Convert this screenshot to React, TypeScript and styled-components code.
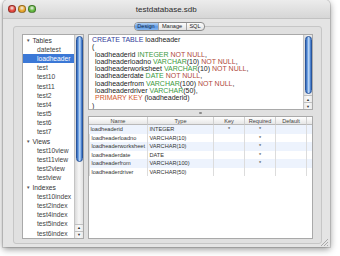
import React from 'react';
import styled, { createGlobalStyle, css } from 'styled-components';

const GlobalStyle = createGlobalStyle`
  html, body { margin: 0; padding: 0; background: #fff; }
  body { font-family: "Liberation Sans", Arial, sans-serif; }
  * { box-sizing: border-box; }
`;

// ─── Window chrome ─────────────────────────────────────────────────────────
const Page = styled.div`
  width: 340px; height: 256px;
  padding-left: 3px;
  overflow: hidden;
`;
const Window = styled.div`
  position: relative;
  width: 327px; height: 247px;
  display: flex; flex-direction: column;
  background: #e4e4e4;
  border-radius: 5px 5px 0 0;
  box-shadow: 0 2px 7px rgba(0,0,0,0.45), 0 0 0 1px rgba(0,0,0,0.12);
  overflow: hidden;
`;
const TitleBar = styled.div`
  height: 19px; flex: none;
  display: flex; align-items: center;
  position: relative;
  padding-left: 5px;
  background: linear-gradient(#ececec, #d6d6d6);
  border-bottom: 1px solid #c2c2c2;
`;
const Lights = styled.div`
  display: flex; gap: 2.5px;
`;
const Light = styled.span<{ $c: string }>`
  width: 7.5px; height: 7.5px; border-radius: 50%;
  background: radial-gradient(circle at 50% 35%, #fff8 0, ${p => p.$c} 55%);
  border: 0.5px solid rgba(0,0,0,0.35);
`;
const Title = styled.div`
  flex: 1; text-align: center;
  margin-right: 33px;
  font-size: 8px; color: #2c2c2c;
`;
const Body = styled.div`
  flex: 1;
  display: flex; flex-direction: column;
  padding: 2.5px 8px 9px 10px;
`;

// ─── Segmented tabs ────────────────────────────────────────────────────────
const Tabs = styled.div`
  align-self: center;
  margin-left: 3px;
  display: flex;
  height: 9px;
  margin-bottom: -4.5px;
  position: relative; z-index: 1;
  border: 1px solid #8d8d8d;
  border-radius: 4px;
  overflow: hidden;
  background: linear-gradient(#fdfdfd, #e2e2e2);
`;
const Tab = styled.div<{ $active?: boolean; $w: number }>`
  width: ${p => p.$w}px;
  display: flex; align-items: center; justify-content: center;
  font-size: 5.6px; color: #222;
  & + & { border-left: 1px solid #a5a5a5; }
  ${p => p.$active && css`
    background: linear-gradient(#b3d2f5, #5d98e2 55%, #86b6ee);
    color: #13294d;
  `}
`;

const GroupBox = styled.div`
  flex: 1; min-height: 0;
  display: flex; gap: 4px;
  padding: 7px 8px 4px 8px;
  border: 1px solid #c6c6c6;
  border-radius: 3px;
  background: #e0e0e0;
`;

// ─── Scrollbars ────────────────────────────────────────────────────────────
const VScroll = styled.div`
  width: 9px; flex: none;
  display: flex; flex-direction: column;
  background: linear-gradient(90deg, #dadada, #f6f6f6 50%, #e2e2e2);
  border-left: 1px solid #c4c4c4;
`;
const Thumb = styled.div<{ $h: number }>`
  height: ${p => p.$h}px;
  margin: 1px 0.5px 0;
  border-radius: 4px;
  background: linear-gradient(90deg, #2f64b8, #7eaee9 35%, #c8def8 55%, #6a9fe2 80%, #2f64b8);
  border: 0.5px solid #28549a;
`;
const Spacer = styled.div`
  flex: 1;
`;
const Arrow = styled.div`
  height: 7px;
  display: flex; align-items: center; justify-content: center;
  border-top: 1px solid #c0c0c0;
  font-size: 4px; color: #333;
  background: linear-gradient(90deg, #e8e8e8, #fcfcfc, #e8e8e8);
`;

// ─── Sidebar tree ──────────────────────────────────────────────────────────
const Sidebar = styled.div`
  width: 62px; flex: none;
  display: flex;
  background: #fff;
  border: 1px solid #a9a9a9;
`;
const TreeList = styled.div`
  flex: 1; min-width: 0;
  padding-top: 0.5px;
  overflow: hidden;
`;
const TreeRow = styled.div<{ $group?: boolean; $selected?: boolean }>`
  height: 9.2px;
  display: flex; align-items: center;
  padding-left: ${p => (p.$group ? 3 : 14)}px;
  font-size: 6.7px; white-space: nowrap;
  color: ${p => (p.$group ? '#333' : '#444')};
  ${p => p.$selected && css`
    background: #3b78d6;
    color: #fff;
  `}
`;
const Disclosure = styled.span`
  font-size: 4.5px; color: #555;
  margin-right: 2px;
`;

// ─── Right side: SQL + fields table ────────────────────────────────────────
const Main = styled.div`
  flex: 1; min-width: 0;
  display: flex; flex-direction: column;
`;
const SqlPanel = styled.div`
  height: 76px; flex: none;
  display: flex;
  background: #fff;
  border: 1px solid #a9a9a9;
`;
const SqlText = styled.div`
  flex: 1;
  padding: 1px 0 0 3px;
  font-size: 7px; line-height: 7.3px;
  color: #222; white-space: pre;
  overflow: hidden;
`;
const Line = styled.div<{ $indent?: boolean }>`
  padding-left: ${p => (p.$indent ? 3 : 0)}px;
`;
const tokColors = { kw: '#33409a', type: '#3b9a41', nn: '#b04a3d', pk: '#d0582e' };
const Tok = styled.span<{ $k: keyof typeof tokColors }>`
  color: ${p => tokColors[p.$k]};
`;
const Splitter = styled.div`
  height: 6px; flex: none;
  display: flex; align-items: center; justify-content: center;
  &::after {
    content: ''; width: 2.5px; height: 2.5px; border-radius: 50%;
    background: #8a8a8a;
  }
`;
const Table = styled.div`
  flex: 1;
  background: #fff;
  border: 1px solid #a9a9a9;
  font-size: 5.6px; color: #333;
`;
const Grid = styled.div`
  display: grid;
  grid-template-columns: 58px 66px 31px 31px 31px 1fr;
`;
const HeadCell = styled.div`
  height: 8px;
  display: flex; align-items: center; justify-content: center;
  background: linear-gradient(#ffffff, #e6e6e6);
  border-bottom: 1px solid #b9b9b9;
  & + & { border-left: 1px solid #cfcfcf; }
  color: #444;
`;
const Cell = styled.div<{ $stripe: boolean; $center?: boolean }>`
  height: 8.5px;
  display: flex; align-items: center;
  justify-content: ${p => (p.$center ? 'center' : 'flex-start')};
  padding-left: ${p => (p.$center ? 0 : 1.5)}px;
  white-space: nowrap;
  background: ${p => (p.$stripe ? '#edf3fd' : '#fff')};
  & + & { border-left: 1px solid #dcdcdc; }
`;

const Grip = styled.svg`
  position: absolute; right: 2px; bottom: 1px;
`;

const tree: { label: string; group?: boolean; selected?: boolean }[] = [
  { label: 'Tables', group: true },
  { label: 'datetest' },
  { label: 'loadheader', selected: true },
  { label: 'test' },
  { label: 'test10' },
  { label: 'test11' },
  { label: 'test2' },
  { label: 'test4' },
  { label: 'test5' },
  { label: 'test6' },
  { label: 'test7' },
  { label: 'Views', group: true },
  { label: 'test10view' },
  { label: 'test11view' },
  { label: 'test2view' },
  { label: 'testview' },
  { label: 'Indexes', group: true },
  { label: 'test10index' },
  { label: 'test2index' },
  { label: 'test4index' },
  { label: 'test5index' },
  { label: 'test6index' },
];

const fields = [
  { name: 'loadheaderid', type: 'INTEGER', key: true, req: true },
  { name: 'loadheaderloadno', type: 'VARCHAR(10)', key: false, req: true },
  { name: 'loadheaderworksheet', type: 'VARCHAR(10)', key: false, req: true },
  { name: 'loadheaderdate', type: 'DATE', key: false, req: true },
  { name: 'loadheaderfrom', type: 'VARCHAR(100)', key: false, req: true },
  { name: 'loadheaderdriver', type: 'VARCHAR(50)', key: false, req: false },
];

function Scrollbar({ thumb }: { thumb: number }) {
  return (
    <VScroll>
      <Thumb $h={thumb} />
      <Spacer />
      <Arrow>▲</Arrow>
      <Arrow>▼</Arrow>
    </VScroll>
  );
}

function Col({ name, type, nn }: { name: string; type: string; nn?: boolean }) {
  // VARCHAR(10) -> keyword green, length in plain text
  const m = type.match(/^([A-Z]+)(.*)$/);
  return (
    <Line $indent>
      {name} <Tok $k="type">{m ? m[1] : type}</Tok>{m ? m[2] : ''}
      {nn ? <> <Tok $k="nn">NOT NULL</Tok>,</> : ','}
    </Line>
  );
}

export default function App() {
  return (
    <>
      <GlobalStyle />
      <Page>
        <Window>
          <TitleBar>
            <Lights>
              <Light $c="#e4463c" />
              <Light $c="#e8a52a" />
              <Light $c="#62b83e" />
            </Lights>
            <Title>testdatabase.sdb</Title>
          </TitleBar>
          <Body>
            <Tabs>
              <Tab $active $w={23}>Design</Tab>
              <Tab $w={28}>Manage</Tab>
              <Tab $w={18}>SQL</Tab>
            </Tabs>
            <GroupBox>
              <Sidebar>
                <TreeList>
                  {tree.map(r => (
                    <TreeRow key={r.label} $group={r.group} $selected={r.selected}>
                      {r.group && <Disclosure>▼</Disclosure>}
                      {r.label}
                    </TreeRow>
                  ))}
                </TreeList>
                <Scrollbar thumb={126} />
              </Sidebar>
              <Main>
                <SqlPanel>
                  <SqlText>
                    <Line><Tok $k="kw">CREATE TABLE</Tok> loadheader</Line>
                    <Line>(</Line>
                    <Col name="loadheaderid" type="INTEGER" nn />
                    <Col name="loadheaderloadno" type="VARCHAR(10)" nn />
                    <Col name="loadheaderworksheet" type="VARCHAR(10)" nn />
                    <Col name="loadheaderdate" type="DATE" nn />
                    <Col name="loadheaderfrom" type="VARCHAR(100)" nn />
                    <Col name="loadheaderdriver" type="VARCHAR(50)" />
                    <Line $indent><Tok $k="pk">PRIMARY KEY</Tok> (loadheaderid)</Line>
                    <Line>)</Line>
                  </SqlText>
                  <Scrollbar thumb={58} />
                </SqlPanel>
                <Splitter />
                <Table>
                  <Grid>
                    <HeadCell>Name</HeadCell>
                    <HeadCell>Type</HeadCell>
                    <HeadCell>Key</HeadCell>
                    <HeadCell>Required</HeadCell>
                    <HeadCell>Default</HeadCell>
                    <HeadCell />
                    {fields.map((f, i) => {
                      const s = i % 2 === 0;
                      return (
                        <React.Fragment key={f.name}>
                          <Cell $stripe={s}>{f.name}</Cell>
                          <Cell $stripe={s}>{f.type}</Cell>
                          <Cell $stripe={s} $center>{f.key ? '*' : ''}</Cell>
                          <Cell $stripe={s} $center>{f.req ? '*' : ''}</Cell>
                          <Cell $stripe={s} />
                          <Cell $stripe={s} />
                        </React.Fragment>
                      );
                    })}
                  </Grid>
                </Table>
              </Main>
            </GroupBox>
          </Body>
          <Grip width="8" height="8" viewBox="0 0 8 8">
            <path d="M1 8 L8 1 M4 8 L8 4 M7 8 L8 7" stroke="#9a9a9a" strokeWidth="0.8" />
          </Grip>
        </Window>
      </Page>
    </>
  );
}
